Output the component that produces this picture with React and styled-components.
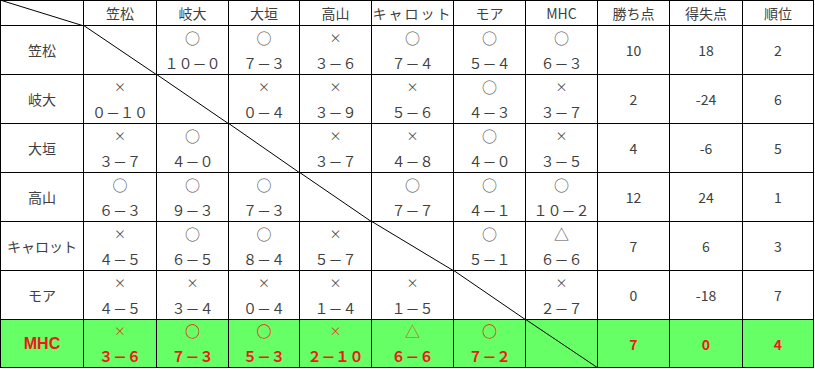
import styled, { createGlobalStyle } from "styled-components";

const GlobalStyle = createGlobalStyle`
  html, body {
    margin: 0;
    padding: 0;
    background: #fff;
  }
  body {
    font-family: "Noto Sans CJK JP", "Noto Sans", sans-serif;
  }
`;

const COLS = [82, 72, 71, 70, 71, 81, 71, 71, 71, 72, 70];

const Grid = styled.div`
  display: grid;
  grid-template-columns: ${COLS.map((w) => w + "px").join(" ")};
  grid-template-rows: 24px repeat(6, 48px) 47px;
  gap: 1px;
  padding: 1px;
  background: #000;
  width: max-content;
`;

const Cell = styled.div`
  position: relative;
  display: flex;
  flex-direction: column;
  align-items: center;
  justify-content: center;
  background: ${(props) => (props.$hl ? "#66ff66" : "#fff")};
  color: ${(props) => (props.$hl ? "#f01818" : "#404040")};
  font-weight: ${(props) => (props.$hl ? 700 : 400)};
  font-size: 14px;
  line-height: 24px;
  overflow: hidden;
`;

const HeadCell = styled(Cell)`
  letter-spacing: ${(props) => (props.$kana ? "2px" : "0")};
`;

const TeamName = styled(Cell)`
  font-family: ${(props) => (props.$hl ? '"Liberation Sans", Arial, sans-serif' : "inherit")};
  font-size: ${(props) => (props.$hl ? "16px" : "14px")};
`;

const Mark = styled.span`
  font-size: ${(props) => (props.$small ? "12px" : "15px")};
  font-weight: ${(props) => (props.$hl && props.$circle ? 700 : 400)};
  color: ${(props) => (props.$hl ? (props.$circle ? "#f01818" : "#d4501c") : "#505050")};
  line-height: 24px;
  height: 24px;
`;

const Score = styled.span`
  font-size: 14px;
  line-height: 24px;
  height: 24px;
  margin-top: 1px;
`;

const Slash = styled.svg`
  position: absolute;
  left: -1px;
  top: -1px;
  width: calc(100% + 2px);
  height: calc(100% + 2px);
  pointer-events: none;
`;

const Diagonal = () => (
  <Slash viewBox="0 0 100 100" preserveAspectRatio="none">
    <line x1="0" y1="0" x2="100" y2="100" stroke="#000" strokeWidth="1" vectorEffect="non-scaling-stroke" />
  </Slash>
);

const toWide = (s) =>
  s.replace(/[0-9]/g, (d) => String.fromCharCode(d.charCodeAt(0) + 0xfee0)).replace("-", "－");

const teams = ["笠松", "岐大", "大垣", "高山", "キャロット", "モア", "MHC"];

const rows = [
  { name: "笠松", res: [null, "○10-0", "○7-3", "×3-6", "○7-4", "○5-4", "○6-3"], pts: "10", diff: "18", rank: "2" },
  { name: "岐大", res: ["×0-10", null, "×0-4", "×3-9", "×5-6", "○4-3", "×3-7"], pts: "2", diff: "-24", rank: "6" },
  { name: "大垣", res: ["×3-7", "○4-0", null, "×3-7", "×4-8", "○4-0", "×3-5"], pts: "4", diff: "-6", rank: "5" },
  { name: "高山", res: ["○6-3", "○9-3", "○7-3", null, "○7-7", "○4-1", "○10-2"], pts: "12", diff: "24", rank: "1" },
  { name: "キャロット", res: ["×4-5", "○6-5", "○8-4", "×5-7", null, "○5-1", "△6-6"], pts: "7", diff: "6", rank: "3" },
  { name: "モア", res: ["×4-5", "×3-4", "×0-4", "×1-4", "×1-5", null, "×2-7"], pts: "0", diff: "-18", rank: "7" },
  { name: "MHC", res: ["×3-6", "○7-3", "○5-3", "×2-10", "△6-6", "○7-2", null], pts: "7", diff: "0", rank: "4", hl: true },
];

const Result = ({ value, hl }) => {
  if (!value) return <Cell $hl={hl}><Diagonal /></Cell>;
  const mark = value[0];
  return (
    <Cell $hl={hl}>
      <Mark $hl={hl} $small={mark === "×"} $circle={mark === "○"}>{mark}</Mark>
      <Score>{toWide(value.slice(1))}</Score>
    </Cell>
  );
};

export default function App() {
  return (
    <>
      <GlobalStyle />
      <Grid>
        <HeadCell><Diagonal /></HeadCell>
        {teams.map((t) => (
          <HeadCell key={t} $kana={t === "キャロット"}>{t}</HeadCell>
        ))}
        <HeadCell>勝ち点</HeadCell>
        <HeadCell>得失点</HeadCell>
        <HeadCell>順位</HeadCell>
        {rows.map((r) => [
          <TeamName key={r.name} $hl={r.hl}>{r.name}</TeamName>,
          ...r.res.map((v, i) => <Result key={r.name + i} value={v} hl={r.hl} />),
          <Cell key={r.name + "p"} $hl={r.hl}>{r.pts}</Cell>,
          <Cell key={r.name + "d"} $hl={r.hl}>{r.diff}</Cell>,
          <Cell key={r.name + "r"} $hl={r.hl}>{r.rank}</Cell>,
        ])}
      </Grid>
    </>
  );
}
